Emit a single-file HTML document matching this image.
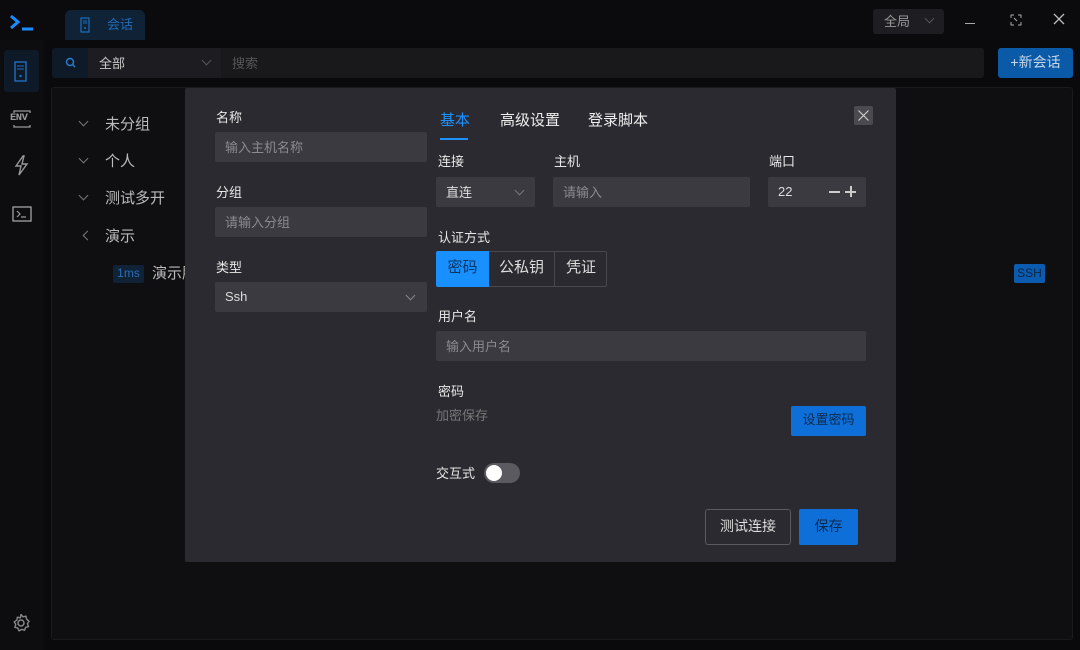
<!DOCTYPE html>
<html><head><meta charset="utf-8"><style>
*{box-sizing:border-box;margin:0;padding:0}
body{width:1080px;height:650px;background:#0a0a0c;font-family:"Liberation Sans","Noto Sans CJK SC",sans-serif;color:#ddd;position:relative;overflow:hidden;font-size:14px}
.a{position:absolute}
.t{margin-top:-2px}
.inp{position:absolute;background:#3a3a40;border-radius:2px;color:#8a8a90;font-size:13px;padding-left:10px;display:flex;align-items:center;padding-bottom:2px}
.lbl{position:absolute;font-size:13px;color:#e8e8e8;margin-top:-2px}
.chev{position:absolute;width:7px;height:7px;border-right:1px solid #888;border-bottom:1px solid #888;transform:rotate(45deg)}
</style></head><body>
<div class="a" style="left:0;top:0;width:1080px;height:40px;background:#0b0b0d"></div>
<svg class="a" style="left:8px;top:12px" width="28" height="22"><path d="M3 4 L10 10 L3 16" stroke="#1a8cff" stroke-width="3" fill="none"/><path d="M14 17 H25" stroke="#1a8cff" stroke-width="3"/></svg>
<div class="a" style="left:65px;top:10px;width:80px;height:30px;background:#0f2236;border-radius:6px 6px 0 0"></div>
<svg class="a" style="left:80px;top:17px" width="10" height="16"><rect x="1" y="1" width="8" height="14" fill="none" stroke="#1a6fbf" stroke-width="1.2"/><path d="M3 4h4M3 6h4" stroke="#1a6fbf"/><circle cx="5" cy="11" r="1" fill="#1a6fbf"/></svg>
<div class="a t" style="left:107px;top:16px;font-size:13px;color:#1f6cb8">会话</div>
<div class="a" style="left:873px;top:9px;width:71px;height:25px;background:#1e1e22;border-radius:3px"></div>
<div class="a t" style="left:884px;top:13px;font-size:13px;color:#999">全局</div>
<div class="chev" style="left:926px;top:15px;border-color:#555"></div>
<div class="a" style="left:965px;top:23px;width:10px;height:1px;background:#aaa"></div>
<svg class="a" style="left:1010px;top:14px" width="12" height="12"><path d="M1 4V1h3M8 1h3v3M11 8v3H8M4 11H1V8M4 4l3 3" stroke="#aaa" fill="none"/></svg>
<svg class="a" style="left:1053px;top:13px" width="12" height="12"><path d="M1 1L11 11M11 1L1 11" stroke="#bbb" stroke-width="1.3"/></svg>
<div class="a" style="left:0;top:40px;width:44px;height:610px;background:#0d0d10"></div>
<div class="a" style="left:4px;top:50px;width:35px;height:42px;background:#0e1a27;border-radius:3px"></div>
<svg class="a" style="left:14px;top:61px" width="14" height="22"><rect x="1" y="1" width="11" height="19" fill="none" stroke="#1f6fc0" stroke-width="1.4"/><path d="M3 5h7M3 8h7" stroke="#1f6fc0"/><circle cx="6.5" cy="15" r="1.2" fill="#1f6fc0"/></svg>
<svg class="a" style="left:10px;top:108px" width="24" height="22"><path d="M4 5V3h16v2M4 17v2h16v-2" stroke="#999" stroke-width="1.3" fill="none"/></svg>
<div class="a" style="left:10px;top:112px;font-size:10.5px;font-weight:bold;color:#999;letter-spacing:-0.5px;font-family:'Liberation Mono',monospace">ENV</div>
<svg class="a" style="left:13px;top:155px" width="16" height="22"><path d="M10 1L3 11h5l-2 9 8-11H9l2-8z" stroke="#999" stroke-width="1.4" fill="none"/></svg>
<svg class="a" style="left:12px;top:206px" width="20" height="16"><rect x="1" y="1" width="18" height="14" fill="none" stroke="#999" stroke-width="1.4"/><path d="M5 5l3 3-3 3M9 11h5" stroke="#999" stroke-width="1.2" fill="none"/></svg>
<svg class="a" style="left:11px;top:613px" width="20" height="20"><circle cx="10" cy="10" r="3" stroke="#888" stroke-width="1.5" fill="none"/><path d="M10 1.5l2 2.3 3-.6.6 3 2.4 2-1.6 2.6 1.2 2.8-3 .8-1 2.9-2.9-1-2.6 1.6-1.3-2.8-3-.8 1-2.9-1.6-2.6 2.6-1.6.6-3 3 .6z" stroke="#888" stroke-width="1.4" fill="none" stroke-linejoin="round"/></svg>
<div class="a" style="left:52px;top:48px;width:932px;height:30px;background:#19191c;border-radius:3px"></div>
<div class="a" style="left:52px;top:48px;width:36px;height:30px;background:#0e1a27;border-radius:3px 0 0 3px"></div>
<svg class="a" style="left:65px;top:57px" width="12" height="12"><circle cx="5" cy="5" r="3.5" stroke="#2a7fd0" stroke-width="1.4" fill="none"/><path d="M7.5 7.5L10 10" stroke="#2a7fd0" stroke-width="1.4"/></svg>
<div class="a" style="left:88px;top:48px;width:133px;height:30px;background:#1d1d21"></div>
<div class="a t" style="left:99px;top:55px;font-size:13px;color:#ccc">全部</div>
<div class="chev" style="left:203px;top:57px;border-color:#555"></div>
<div class="a t" style="left:232px;top:55px;font-size:13px;color:#555">搜索</div>
<div class="a" style="left:998px;top:48px;width:75px;height:30px;background:#0a5aa8;border-radius:3px;color:#c8d8ea;font-size:14px;text-align:center;line-height:28px">+新会话</div>
<div class="a" style="left:51px;top:87px;width:1022px;height:553px;background:#0f0f12;border:1px solid #1a1a1d;border-radius:3px"></div>
<div class="a" style="left:80px;top:118px;width:7px;height:7px;border-right:1px solid #777;border-bottom:1px solid #777;transform:rotate(45deg)"></div>
<div class="a t" style="left:105px;top:115px;font-size:15px;color:#bbb">未分组</div>
<div class="a" style="left:80px;top:155px;width:7px;height:7px;border-right:1px solid #777;border-bottom:1px solid #777;transform:rotate(45deg)"></div>
<div class="a t" style="left:105px;top:152px;font-size:15px;color:#bbb">个人</div>
<div class="a" style="left:80px;top:192px;width:7px;height:7px;border-right:1px solid #777;border-bottom:1px solid #777;transform:rotate(45deg)"></div>
<div class="a t" style="left:105px;top:189px;font-size:15px;color:#bbb">测试多开</div>
<div class="a" style="left:84px;top:232px;width:7px;height:7px;border-left:1px solid #777;border-bottom:1px solid #777;transform:rotate(45deg)"></div>
<div class="a t" style="left:105px;top:227px;font-size:15px;color:#bbb">演示</div>
<div class="a" style="left:113px;top:265px;width:31px;height:18px;background:#0f2236;border-radius:2px;color:#2a6fb8;font-size:12px;text-align:center;line-height:17px">1ms</div>
<div class="a t" style="left:152px;top:264px;font-size:15px;color:#bbb">演示服</div>
<div class="a" style="left:1014px;top:264px;width:31px;height:19px;background:#0b5bb0;border-radius:2px;color:#082748;font-size:12px;text-align:center;line-height:18px">SSH</div>
<div class="a" style="left:185px;top:88px;width:711px;height:474px;background:#2b2a30;border-radius:2px"></div>
<div class="lbl" style="left:216px;top:109px">名称</div>
<div class="inp" style="left:215px;top:132px;width:212px;height:30px">输入主机名称</div>
<div class="lbl" style="left:216px;top:184px">分组</div>
<div class="inp" style="left:215px;top:207px;width:212px;height:30px">请输入分组</div>
<div class="lbl" style="left:216px;top:259px">类型</div>
<div class="inp" style="left:215px;top:282px;width:212px;height:30px;color:#ddd">Ssh</div>
<div class="chev" style="left:407px;top:292px"></div>
<div class="a t" style="left:440px;top:111px;font-size:15px;color:#1e90ff">基本</div>
<div class="a" style="left:440px;top:138px;width:28px;height:2px;background:#1e90ff"></div>
<div class="a t" style="left:500px;top:111px;font-size:15px;color:#eee">高级设置</div>
<div class="a t" style="left:588px;top:111px;font-size:15px;color:#eee">登录脚本</div>
<div class="a" style="left:854px;top:106px;width:19px;height:19px;background:#4a4a50;border-radius:2px"></div>
<svg class="a" style="left:857px;top:109px" width="13" height="13"><path d="M1.5 1.5l10 10M11.5 1.5l-10 10" stroke="#ccc" stroke-width="1.2"/></svg>
<div class="lbl" style="left:438px;top:153px">连接</div>
<div class="inp" style="left:436px;top:177px;width:99px;height:30px;color:#ddd">直连</div>
<div class="chev" style="left:516px;top:187px;border-color:#777"></div>
<div class="lbl" style="left:554px;top:153px">主机</div>
<div class="inp" style="left:553px;top:177px;width:197px;height:30px">请输入</div>
<div class="lbl" style="left:769px;top:153px">端口</div>
<div class="inp" style="left:768px;top:177px;width:98px;height:30px;color:#ddd">22</div>
<div class="a" style="left:829px;top:191px;width:11px;height:1.5px;background:#ccc"></div>
<div class="a" style="left:845px;top:191px;width:11px;height:1.5px;background:#ccc"></div>
<div class="a" style="left:850px;top:186px;width:1.5px;height:11px;background:#ccc"></div>
<div class="lbl" style="left:438px;top:229px">认证方式</div>
<div class="a" style="left:436px;top:251px;width:171px;height:36px;border:1px solid #48484e;border-radius:2px"></div>
<div class="a" style="left:436px;top:251px;width:53px;height:36px;background:#1890ff;border-radius:2px 0 0 2px;color:#0a3566;font-size:15px;text-align:center;line-height:34px">密码</div>
<div class="a" style="left:489px;top:251px;width:66px;height:36px;border-right:1px solid #48484e;color:#ddd;font-size:15px;text-align:center;line-height:34px">公私钥</div>
<div class="a" style="left:555px;top:251px;width:52px;height:36px;color:#ddd;font-size:15px;text-align:center;line-height:34px">凭证</div>
<div class="lbl" style="left:438px;top:308px">用户名</div>
<div class="inp" style="left:436px;top:331px;width:430px;height:30px">输入用户名</div>
<div class="lbl" style="left:438px;top:383px">密码</div>
<div class="a t" style="left:436px;top:407px;font-size:13px;color:#777">加密保存</div>
<div class="a" style="left:791px;top:406px;width:75px;height:30px;background:#0f6fd8;border-radius:2px;color:#0b2a4c;font-size:13px;text-align:center;line-height:28px">设置密码</div>
<div class="lbl" style="left:436px;top:465px">交互式</div>
<div class="a" style="left:484px;top:463px;width:36px;height:20px;background:#5a5a60;border-radius:10px"></div>
<div class="a" style="left:486px;top:465px;width:16px;height:16px;background:#fff;border-radius:50%"></div>
<div class="a" style="left:705px;top:509px;width:86px;height:36px;border:1px solid #5a5a60;border-radius:3px;color:#ddd;font-size:14px;text-align:center;line-height:32px">测试连接</div>
<div class="a" style="left:799px;top:509px;width:59px;height:36px;background:#0f6fd8;border-radius:2px;color:#0b2a4c;font-size:14px;text-align:center;line-height:34px">保存</div>
</body></html>
